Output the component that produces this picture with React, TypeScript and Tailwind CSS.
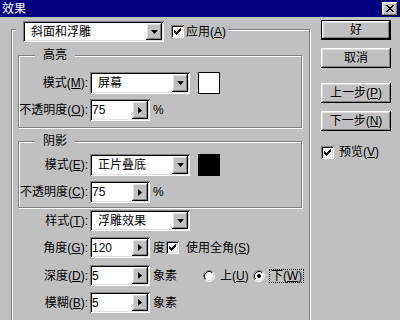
import type { ReactNode } from 'react'

const RAISED =
  'shadow-[inset_-1px_-1px_0_#000,inset_1px_1px_0_#fff,inset_-2px_-2px_0_#808080,inset_2px_2px_0_#dfdfdf]'
const SUNKEN =
  'shadow-[inset_1px_1px_0_#808080,inset_-1px_-1px_0_#fff,inset_2px_2px_0_#000,inset_-2px_-2px_0_#dfdfdf]'
const ETCHED = 'border border-[#808080] shadow-[inset_1px_1px_0_#fff,1px_1px_0_#fff]'

function Key({ k }: { k: string }) {
  return (
    <>
      (<u className="underline-offset-1">{k}</u>)
    </>
  )
}

function Combo({ text, className }: { text: string; className: string }) {
  return (
    <div className={`flex items-center bg-white p-[2px] ${SUNKEN} ${className}`}>
      <span className="flex-1 pl-[6px] leading-none">{text}</span>
      <div className={`w-[16px] h-full flex items-center justify-center bg-[#c0c0c0] ${RAISED}`}>
        <svg width="7" height="4" viewBox="0 0 7 4">
          <path d="M0 0h7L3.5 4z" fill="#000" />
        </svg>
      </div>
    </div>
  )
}

function Spin({ value, className }: { value: string; className: string }) {
  return (
    <div className={`w-[60px] flex items-center bg-white p-[2px] ${SUNKEN} ${className}`}>
      <span className="flex-1 leading-none">{value}</span>
      <div className={`w-[16px] h-full flex items-center justify-center bg-[#c0c0c0] ${RAISED}`}>
        <svg width="4" height="7" viewBox="0 0 4 7">
          <path d="M0 0L4 3.5L0 7z" fill="#000" />
        </svg>
      </div>
    </div>
  )
}

function Check() {
  return (
    <div className={`w-[13px] h-[13px] shrink-0 bg-white flex items-center justify-center ${SUNKEN}`}>
      <svg width="7" height="7" viewBox="0 0 7 7" shapeRendering="crispEdges">
        <path
          d="M6 0h1v1h-1zM5 1h2v1h-2zM0 2h1v1h-1zM4 2h3v1h-3zM0 3h2v1h-2zM3 3h3v1h-3zM0 4h5v1h-5zM1 5h3v1h-3zM2 6h1v1h-1z"
          fill="#000"
        />
      </svg>
    </div>
  )
}

function Radio({ on }: { on?: boolean }) {
  return (
    <svg width="12" height="12" viewBox="0 0 12 12" className="shrink-0">
      <circle cx="6" cy="6" r="4.5" fill="#fff" />
      <path d="M9.89 2.11A5.5 5.5 0 0 0 2.11 9.89" stroke="#808080" fill="none" />
      <path d="M2.11 9.89A5.5 5.5 0 0 0 9.89 2.11" stroke="#fff" fill="none" />
      <path d="M9.18 2.82A4.5 4.5 0 0 0 2.82 9.18" stroke="#000" fill="none" />
      <path d="M2.82 9.18A4.5 4.5 0 0 0 9.18 2.82" stroke="#dfdfdf" fill="none" />
      {on && <circle cx="6" cy="6" r="2" fill="#000" />}
    </svg>
  )
}

function Btn({ children, def }: { children: ReactNode; def?: boolean }) {
  if (def) {
    return (
      <button className="w-[70px] h-[20px] border border-black bg-[#c0c0c0]">
        <div className={`h-full flex items-center justify-center ${RAISED}`}>{children}</div>
      </button>
    )
  }
  return (
    <button className={`w-[70px] h-[20px] flex items-center justify-center bg-[#c0c0c0] ${RAISED}`}>
      {children}
    </button>
  )
}

function Group({ title, className, children }: { title: string; className: string; children: ReactNode }) {
  return (
    <div className={`relative w-[284px] flex flex-col ${ETCHED} ${className}`}>
      <span className="absolute left-[16px] top-[-8px] bg-[#c0c0c0] px-[8px] leading-[14px]">{title}</span>
      {children}
    </div>
  )
}

function Label({ children, w }: { children: ReactNode; w: string }) {
  return <div className={`${w} flex justify-end whitespace-nowrap mr-[2px]`}>{children}</div>
}

export default function App() {
  return (
    <div className="w-[400px] h-[320px] overflow-hidden bg-[#c0c0c0] text-black text-[12px] leading-[14px] font-['Liberation_Sans','Noto_Sans_CJK_SC',sans-serif]">
      <div className="h-[17px] bg-[#000080] flex items-center justify-between px-[2px]">
        <span className="text-white leading-none">效果</span>
        <button className={`w-[16px] h-[14px] bg-[#c0c0c0] flex items-center justify-center ${RAISED}`}>
          <svg width="8" height="7" viewBox="0 0 8 7" shapeRendering="crispEdges">
            <path
              d="M0 0h2v1h-2zM6 0h2v1h-2zM1 1h2v1h-2zM5 1h2v1h-2zM2 2h4v1h-4zM3 3h2v1h-2zM2 4h4v1h-4zM1 5h2v1h-2zM5 5h2v1h-2zM0 6h2v1h-2zM6 6h2v1h-2z"
              fill="#000"
            />
          </svg>
        </button>
      </div>

      <div className="flex">
        <div className={`relative ml-[11px] mt-[12px] w-[299px] h-[300px] ${ETCHED}`}>
          <div className="absolute left-[4px] top-[-9px] flex items-center bg-[#c0c0c0] pl-[7px] pr-[2px]">
            <Combo text="斜面和浮雕" className="w-[141px] h-[21px]" />
            <div className="ml-[7px]">
              <Check />
            </div>
            <span className="ml-[2px]">
              应用<Key k="A" />
            </span>
          </div>

          <div className="flex flex-col pl-[6px] pt-[25px]">
            <Group title="高亮" className="h-[73px] pt-[16px]">
              <div className="flex items-center h-[22px]">
                <Label w="w-[69px]">
                  模式<Key k="M" />:
                </Label>
                <Combo text="屏幕" className="w-[100px] h-[22px]" />
                <div className="ml-[8px] w-[22px] h-[22px] bg-white border border-black" />
              </div>
              <div className="flex items-center h-[22px] mt-[5px]">
                <Label w="w-[69px]">
                  不透明度<Key k="O" />:
                </Label>
                <Spin value="75" className="h-[22px]" />
                <span className="ml-[3px]">%</span>
              </div>
            </Group>

            <Group title="阴影" className="mt-[13px] h-[67px] pt-[12px]">
              <div className="flex items-center h-[22px]">
                <Label w="w-[69px]">
                  模式<Key k="E" />:
                </Label>
                <Combo text="正片叠底" className="w-[100px] h-[22px]" />
                <div className="ml-[8px] w-[22px] h-[22px] bg-black border border-black" />
              </div>
              <div className="flex items-center h-[22px] mt-[5px]">
                <Label w="w-[69px]">
                  不透明度<Key k="C" />:
                </Label>
                <Spin value="75" className="h-[22px]" />
                <span className="ml-[3px]">%</span>
              </div>
            </Group>

            <div className="flex items-center h-[21px] mt-[2px]">
              <Label w="w-[70px]">
                样式<Key k="T" />:
              </Label>
              <Combo text="浮雕效果" className="w-[100px] h-[21px]" />
            </div>

            <div className="flex items-center h-[21px] mt-[6px]">
              <Label w="w-[70px]">
                角度<Key k="G" />:
              </Label>
              <Spin value="120" className="h-[21px]" />
              <span className="ml-[3px]">度</span>
              <div className="ml-[1px]">
                <Check />
              </div>
              <span className="ml-[7px]">
                使用全角<Key k="S" />
              </span>
            </div>

            <div className="flex items-center h-[21px] mt-[7px]">
              <Label w="w-[70px]">
                深度<Key k="D" />:
              </Label>
              <Spin value="5" className="h-[21px]" />
              <span className="ml-[3px]">象素</span>
              <div className="ml-[26px]">
                <Radio />
              </div>
              <span className="ml-[5px] w-[33px] whitespace-nowrap">
                上<Key k="U" />
              </span>
              <Radio on />
              <span className="ml-[4px] border border-dotted border-black px-[1px] leading-[12px] whitespace-nowrap">
                下<Key k="W" />
              </span>
            </div>

            <div className="flex items-center h-[21px] mt-[6px]">
              <Label w="w-[70px]">
                模糊<Key k="B" />:
              </Label>
              <Spin value="5" className="h-[21px]" />
              <span className="ml-[3px]">象素</span>
            </div>
          </div>
        </div>

        <div className="ml-[11px] pt-[3px] flex flex-col">
          <Btn def>好</Btn>
          <div className="mt-[8px]">
            <Btn>取消</Btn>
          </div>
          <div className="mt-[15px]">
            <Btn>
              上一步<Key k="P" />
            </Btn>
          </div>
          <div className="mt-[8px]">
            <Btn>
              下一步<Key k="N" />
            </Btn>
          </div>
          <div className="mt-[14px] flex items-center">
            <Check />
            <span className="ml-[5px]">
              预览<Key k="V" />
            </span>
          </div>
        </div>
      </div>
    </div>
  )
}
